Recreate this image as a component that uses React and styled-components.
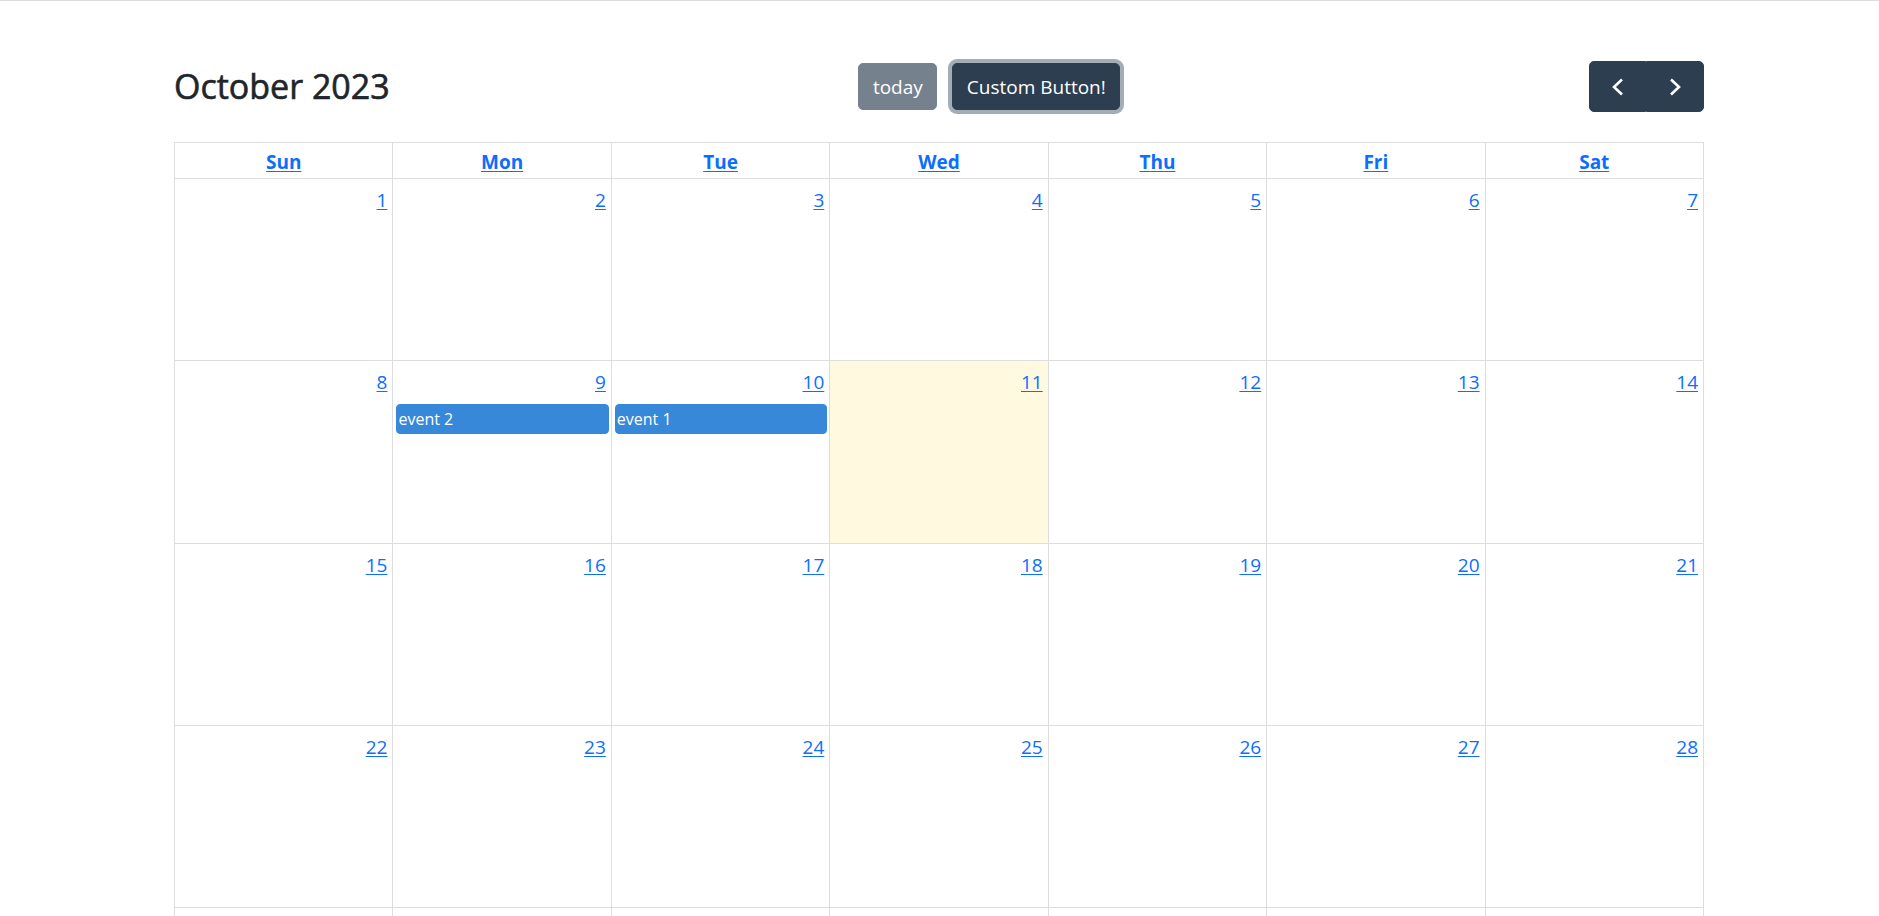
import React from 'react';
import styled, { createGlobalStyle } from 'styled-components';

const GlobalStyle = createGlobalStyle`
  html, body { margin: 0; padding: 0; background: #ffffff; }
  body {
    font-family: "Open Sans", "Noto Sans", "Liberation Sans", sans-serif;
    color: #212529;
  }
  *, *::before, *::after { box-sizing: border-box; }
`;

const Page = styled.div`
  border-top: 1px solid #dcdcdc;
  padding: 60px 175px 40px 174px;
`;

const Toolbar = styled.div`
  display: flex;
  justify-content: space-between;
  align-items: center;
  height: 51px;
  margin-bottom: 30px;
`;

const Title = styled.h2`
  margin: 0;
  font-size: 34px;
  font-weight: 500;
  line-height: 1.2;
  color: #212529;
  -webkit-text-stroke: 0.6px #212529;
`;

const ButtonChunk = styled.div`
  display: flex;
  align-items: center;
  gap: 15px;
`;

const ToolButton = styled.button`
  font-family: inherit;
  font-size: 19px;
  line-height: 30px;
  height: 47px;
  padding: 0 13.5px;
  display: inline-flex;
  align-items: center;
  color: #ffffff;
  background: #2c3e50;
  border: 1px solid #2c3e50;
  border-radius: 5px;
  opacity: ${(p) => (p.$disabled ? 0.65 : 1)};
  box-shadow: ${(p) => (p.$focused ? '0 0 0 4px rgba(76, 91, 106, 0.5)' : 'none')};
  cursor: pointer;
`;

const NavGroup = styled.div`
  display: flex;
`;

const NavButton = styled.button`
  width: 57.5px;
  height: 51px;
  padding: 0;
  display: flex;
  align-items: center;
  justify-content: center;
  background: #2c3e50;
  border: 1px solid #2c3e50;
  border-radius: ${(p) => (p.$side === 'left' ? '5px 0 0 5px' : '0 5px 5px 0')};
  cursor: pointer;
`;

const Grid = styled.div`
  display: grid;
  grid-template-columns: repeat(7, 1fr);
  border-top: 1px solid #dddddd;
  border-left: 1px solid #dddddd;
`;

const HeadCell = styled.div`
  border-right: 1px solid #dddddd;
  border-bottom: 1px solid #dddddd;
  padding: 3.5px 4px 1.5px;
  line-height: 30px;
  font-size: 19px;
  font-weight: 700;
  text-align: center;
`;

const CalLink = styled.a`
  color: #0d6efd;
  text-decoration: underline;
  text-underline-offset: 2px;
  cursor: pointer;
  opacity: ${(p) => (p.$other ? 0.3 : 1)};
`;

const DayCell = styled.div`
  height: 182.3px;
  min-width: 0;
  display: flex;
  flex-direction: column;
  border-right: 1px solid #dddddd;
  border-bottom: 1px solid #dddddd;
  background: ${(p) => (p.$today ? '#fffadf' : 'transparent')};
`;

const DayTop = styled.div`
  display: flex;
  justify-content: flex-end;
  padding: 6px 5px 4px;
  font-size: 19px;
  line-height: 30px;
`;

const EventBar = styled.div`
  margin: 2.5px 2px 0 3px;
  height: 30px;
  display: flex;
  align-items: center;
  padding: 0 1px;
  font-size: 16px;
  color: #ffffff;
  background: #3788d8;
  border: 1px solid #3788d8;
  border-radius: 4px;
  white-space: nowrap;
  overflow: hidden;
`;

const Chevron = ({ dir }) => (
  <svg width="14" height="20" viewBox="0 0 14 20" aria-hidden="true">
    <path
      d={dir === 'left' ? 'M11 2.5 L3 10 L11 17.5' : 'M3 2.5 L11 10 L3 17.5'}
      fill="none"
      stroke="#ffffff"
      strokeWidth="2.6"
    />
  </svg>
);

const WEEKDAYS = ['Sun', 'Mon', 'Tue', 'Wed', 'Thu', 'Fri', 'Sat'];

const EVENTS = {
  '2023-10-09': ['event 2'],
  '2023-10-10': ['event 1'],
};

const TODAY = '2023-10-11';

function buildWeeks() {
  const start = new Date(2023, 9, 1);
  const days = [];
  for (let i = 0; i < 42; i++) {
    const d = new Date(start);
    d.setDate(start.getDate() + i);
    const key = `${d.getFullYear()}-${String(d.getMonth() + 1).padStart(2, '0')}-${String(
      d.getDate()
    ).padStart(2, '0')}`;
    days.push({ key, day: d.getDate(), other: d.getMonth() !== 9 });
  }
  return days;
}

export default function App() {
  const days = buildWeeks();
  return (
    <>
      <GlobalStyle />
      <Page>
        <Toolbar>
          <Title>October 2023</Title>
          <ButtonChunk>
            <ToolButton $disabled>today</ToolButton>
            <ToolButton $focused>Custom Button!</ToolButton>
          </ButtonChunk>
          <NavGroup>
            <NavButton $side="left" aria-label="prev">
              <Chevron dir="left" />
            </NavButton>
            <NavButton $side="right" aria-label="next">
              <Chevron dir="right" />
            </NavButton>
          </NavGroup>
        </Toolbar>
        <Grid>
          {WEEKDAYS.map((w) => (
            <HeadCell key={w}>
              <CalLink>{w}</CalLink>
            </HeadCell>
          ))}
          {days.map((d) => (
            <DayCell key={d.key} $today={d.key === TODAY}>
              <DayTop>
                <CalLink $other={d.other}>{d.day}</CalLink>
              </DayTop>
              {(EVENTS[d.key] || []).map((title) => (
                <EventBar key={title}>{title}</EventBar>
              ))}
            </DayCell>
          ))}
        </Grid>
      </Page>
    </>
  );
}
